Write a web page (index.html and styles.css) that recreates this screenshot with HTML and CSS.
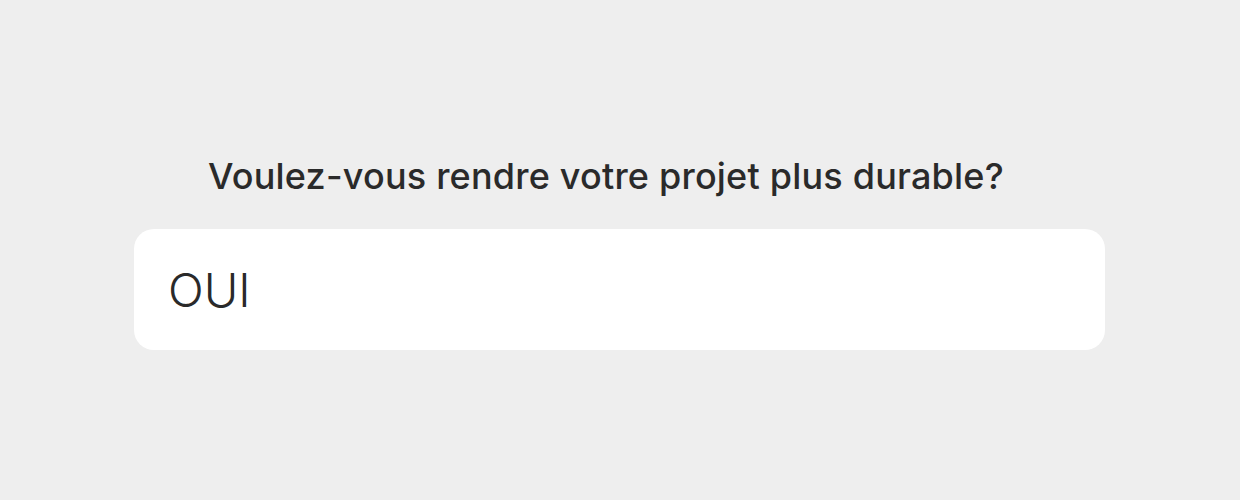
FILE: index.html
```html
<!DOCTYPE html>
<html lang="fr">
<head>
<meta charset="utf-8">
<link rel="stylesheet" href="styles.css">
</head>
<body>
<main class="page">
  <section class="question">
    <h1 class="question-title">Voulez-vous rendre votre projet plus durable?</h1>
    <div class="answer-box"><span class="answer-text">OUI</span></div>
  </section>
</main>
</body>
</html>
```
FILE: styles.css
```css
html, body {
  margin: 0;
  padding: 0;
  background: #eeeeee;
  width: 1240px;
  height: 500px;
  overflow: hidden;
}
.page {
  padding-top: 152px;
  padding-left: 134px;
}
.question {
  width: 971px;
  display: flex;
  flex-direction: column;
}
.question-title {
  margin: 0 0 0 74px;
  font-family: Inter, "Liberation Sans", Arial, sans-serif;
  font-weight: 500;
  font-size: 36px;
  letter-spacing: 0.2px;
  line-height: 48px;
  color: #2a2a2a;
  white-space: nowrap;
}
.answer-box {
  margin-top: 29px;
  height: 121px;
  background: #ffffff;
  border-radius: 20px;
  display: flex;
  align-items: center;
  padding-left: 34px;
  box-sizing: border-box;
}
.answer-text {
  font-family: Inter, "Liberation Sans", Arial, sans-serif;
  font-weight: 300;
  font-size: 47px;
  color: #2a2a2a;
}
```
